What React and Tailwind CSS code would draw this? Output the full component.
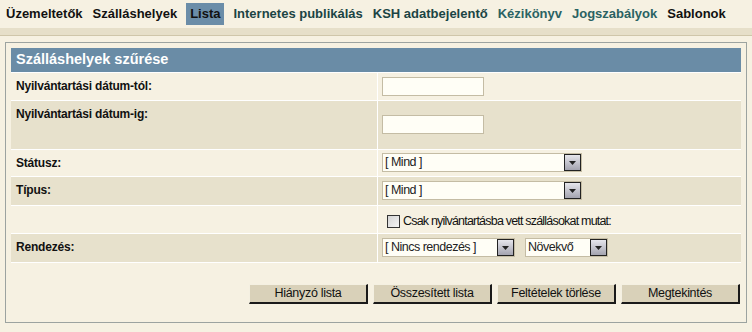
import { useState } from "react";

const navItems = [
  { label: "Üzemeltetők", tone: "dark" },
  { label: "Szálláshelyek", tone: "dark" },
  { label: "Lista", tone: "active" },
  { label: "Internetes publikálás", tone: "green" },
  { label: "KSH adatbejelentő", tone: "green" },
  { label: "Kézikönyv", tone: "teal" },
  { label: "Jogszabályok", tone: "teal" },
  { label: "Sablonok", tone: "dark" },
];

function FakeSelect({ value, width }) {
  return (
    <div
      className="flex h-[19px] items-center justify-between border border-[#c4bca4] bg-[#fffef6] pl-[2px]"
      style={{ width }}
    >
      <span className="text-[12.5px] leading-none tracking-[-0.5px] text-[#222]">{value}</span>
      <span className="flex h-[17px] w-[17px] items-center justify-center border border-[#222] bg-gradient-to-b from-[#e6e6ec] to-[#a4a4b0]">
        <svg width="7" height="4" viewBox="0 0 7 4">
          <path d="M0 0h7L3.5 4z" fill="#222" />
        </svg>
      </span>
    </div>
  );
}

function Row({ label, children, dark, className = "" }) {
  return (
    <div
      className={`grid grid-cols-[367px_1fr] border-t border-white ${
        dark ? "bg-[#e7e1cc]" : "bg-[#f6f1e2]"
      } ${className}`}
    >
      <div className="border-r border-white pl-[5px] pt-[6px] text-[12px] font-bold leading-[14px] tracking-[-0.2px] text-[#111]">
        {label}
      </div>
      <div className="pl-[4px]">{children}</div>
    </div>
  );
}

function Btn({ children }) {
  return (
    <button className="h-[20px] w-[119px] border-b-2 border-l border-r-2 border-t border-b-[#1a1a1a] border-l-[#f4f0e2] border-r-[#1a1a1a] border-t-[#f4f0e2] bg-[#d9d1b9] text-[12.5px] leading-none tracking-[-0.3px] text-[#111]">
      {children}
    </button>
  );
}

export default function App() {
  const [onlyReg, setOnlyReg] = useState(false);

  return (
    <div
      className="h-[332px] w-[752px] bg-[#f6f1e2]"
      style={{ fontFamily: '"Liberation Sans", Arial, sans-serif' }}
    >
      <nav className="flex h-[28px] items-center gap-[8px] pl-[5px]">
        {navItems.map((item) => (
          <span
            key={item.label}
            className={`px-[1px] py-[3px] text-[13px] font-bold leading-[16px] ${
              item.tone === "active"
                ? "bg-[#6b8da8] px-[4px] text-[#111]"
                : item.tone === "green"
                ? "text-[#1b4444]"
                : item.tone === "teal"
                ? "text-[#2a6262]"
                : "text-[#111]"
            }`}
          >
            {item.label}
          </span>
        ))}
      </nav>
      <div className="h-[8px] border-b border-[#cfc6aa] bg-[#e6dfc9]" />

      <div className="ml-[5px] mt-[6px] w-[742px] border border-[#9ca3a0] p-[5px] pb-[1px]">
        <div className="flex h-[24px] items-center bg-[#6a8ca6] pl-[5px] text-[14.5px] font-bold text-white">
          Szálláshelyek szűrése
        </div>

        <Row label="Nyilvántartási dátum-tól:" className="h-[28px]">
          <input className="mt-[4px] h-[19px] w-[102px] border border-[#c4bca4] bg-[#fffef6] outline-none" />
        </Row>
        <Row label="Nyilvántartási dátum-ig:" dark className="h-[49px]">
          <input className="mt-[14px] h-[19px] w-[102px] border border-[#c4bca4] bg-[#fffef6] outline-none" />
        </Row>
        <Row label="Státusz:" className="h-[27px]">
          <div className="mt-[3px]">
            <FakeSelect value="[ Mind ]" width={200} />
          </div>
        </Row>
        <Row label="Típus:" dark className="h-[29px]">
          <div className="mt-[4px]">
            <FakeSelect value="[ Mind ]" width={200} />
          </div>
        </Row>
        <Row label="" className="h-[28px]">
          <label className="mt-[6px] flex items-center gap-[3px] pl-[5px] text-[12.5px] tracking-[-0.8px] text-[#111]">
            <span
              onClick={() => setOnlyReg(!onlyReg)}
              className="flex h-[13px] w-[13px] items-center justify-center border border-[#333] bg-gradient-to-br from-[#d4d4d4] to-[#f4f4f4]"
            >
              {onlyReg && <span className="h-[7px] w-[7px] bg-[#333]" />}
            </span>
            Csak nyilvántartásba vett szállásokat mutat:
          </label>
        </Row>
        <Row label="Rendezés:" dark className="h-[29px]">
          <div className="mt-[4px] flex gap-[10px]">
            <FakeSelect value="[ Nincs rendezés ]" width={133} />
            <FakeSelect value="Növekvő" width={83} />
          </div>
        </Row>
        <div className="flex h-[59px] justify-end gap-[5px] border-t border-white pr-[1px] pt-[21px]">
          <Btn>Hiányzó lista</Btn>
          <Btn>Összesített lista</Btn>
          <Btn>Feltételek törlése</Btn>
          <Btn>Megtekintés</Btn>
        </div>
      </div>
    </div>
  );
}
